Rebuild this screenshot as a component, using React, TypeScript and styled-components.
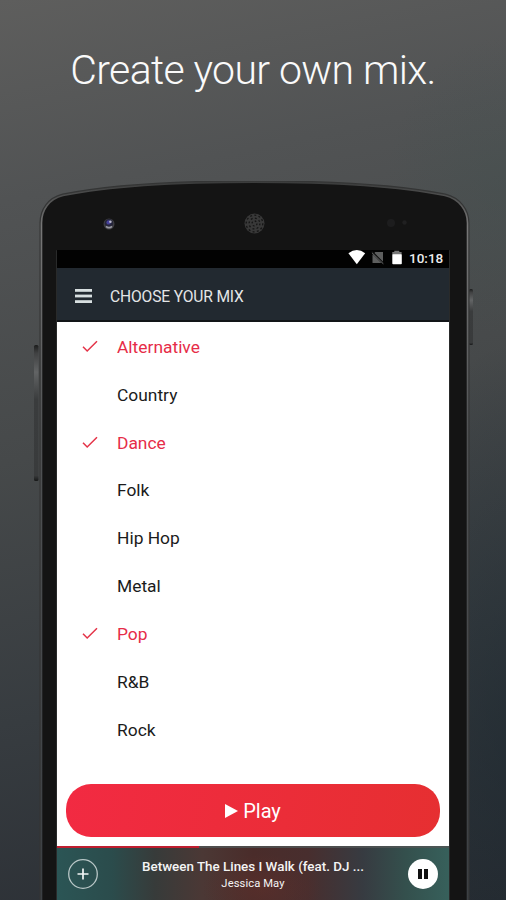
import React from "react";
import styled, { createGlobalStyle } from "styled-components";

const GlobalStyle = createGlobalStyle`
  *, *::before, *::after { box-sizing: border-box; }
  body {
    margin: 0;
    background: #3a3f42;
    font-family: Roboto, "Liberation Sans", sans-serif;
  }
`;

const Page = styled.main`
  width: 506px;
  height: 900px;
  overflow: hidden;
  display: flex;
  flex-direction: column;
  background:
    radial-gradient(ellipse 120px 150px at 506px 185px, rgba(62, 80, 78, 0.3), transparent),
    radial-gradient(ellipse 170px 400px at 520px 740px, rgba(24, 38, 46, 0.5), transparent),
    linear-gradient(168deg, #5e5e5d 0%, #515354 20%, #46494a 46%, #373c40 72%, #292d33 100%);
`;

const Headline = styled.h1`
  margin: 0;
  height: 181px;
  padding: 46px 0 0;
  text-align: center;
  color: #fafafa;
  font-size: 41px;
  font-weight: 300;
  line-height: 48px;
  letter-spacing: -0.62px;
  white-space: nowrap;
`;

const Phone = styled.section`
  position: relative;
  flex: 1;
  padding: 69px 57px 0 57px;
`;

const Shell = styled.svg`
  position: absolute;
  inset: 0;
`;

const Screen = styled.div`
  position: relative;
  width: 392px;
  height: 650px;
  display: flex;
  flex-direction: column;
  background: #fff;
`;

const StatusBar = styled.div`
  height: 18px;
  flex: none;
  display: flex;
  justify-content: flex-end;
  background: #020202;
`;

const AppBar = styled.header`
  height: 54px;
  flex: none;
  display: flex;
  align-items: center;
  padding: 4px 0 0 18px;
  gap: 18px;
  background: #222930;
  border-bottom: 2px solid #121518;
`;

const BarTitle = styled.h2`
  margin: 0;
  padding-top: 1px;
  color: #e4e6e7;
  font-size: 15.6px;
  font-weight: 400;
  line-height: 20px;
  letter-spacing: -0.15px;
  white-space: nowrap;
`;

const Genres = styled.ul`
  list-style: none;
  margin: 0;
  padding: 1px 0 0;
  flex: 1;
`;

const Genre = styled.li<{ $on?: boolean }>`
  height: 47.85px;
  display: grid;
  grid-template-columns: 35px 1fr;
  align-items: center;
  padding-left: 25px;
  color: ${(p) => (p.$on ? "#e62c48" : "#1b1b1b")};
  font-size: 17.4px;
  line-height: 22px;
`;

const PlayButton = styled.button`
  height: 53px;
  flex: none;
  margin: 0 9px 9px;
  padding: 0;
  border: 0;
  border-radius: 25px;
  display: flex;
  align-items: center;
  justify-content: center;
  gap: 5px;
  background: linear-gradient(100deg, #f22a42, #e62f31);
  color: #fff;
  font: 400 20px/26px Roboto, "Liberation Sans", sans-serif;
`;

const Player = styled.footer`
  height: 54px;
  flex: none;
  display: grid;
  grid-template-columns: 52px 1fr 52px;
  grid-template-rows: 2px 1fr;
  align-items: center;
  justify-items: center;
  background:
    radial-gradient(ellipse 60px 34px at 205px 42px, rgba(98, 48, 43, 0.5), transparent),
    linear-gradient(90deg, #2b5555 0%, #2b4c4c 14%, #373b3a 25%, #4b3835 37%, #4a2c2a 50%, #482e2e 64%, #373b41 78%, #34504d 89%, #37605b 100%);
`;

const Progress = styled.div`
  grid-column: 1 / -1;
  align-self: start;
  width: 100%;
  height: 2px;
  background: linear-gradient(90deg, #bf1e2f 0 142px, rgba(80, 84, 84, 0.8) 142px);
`;

const RoundIcon = styled.svg`
  margin-bottom: 1px;
`;

const Track = styled.div`
  width: 100%;
  padding-top: 1px;
  text-align: center;
  color: #f4f4f4;
  white-space: nowrap;
`;

const TrackTitle = styled.div`
  font-size: 13.4px;
  font-weight: 500;
  line-height: 17px;
`;

const Artist = styled.div`
  font-size: 11.2px;
  font-weight: 400;
  line-height: 15px;
  letter-spacing: 0.1px;
  padding-top: 1px;
`;

const genres = [
  { name: "Alternative", on: true },
  { name: "Country" },
  { name: "Dance", on: true },
  { name: "Folk" },
  { name: "Hip Hop" },
  { name: "Metal" },
  { name: "Pop", on: true },
  { name: "R&B" },
  { name: "Rock" },
];

const body =
  "M41.5 730V42C41.5 29 49 18 63 14.5C110 5 180 1.2 254 1.2C328 1.2 398 5 445 14.5C459 18 467.5 29 467.5 42V730Z";

function PhoneShell() {
  return (
    <Shell width="506" height="719" viewBox="0 0 506 719" aria-hidden>
      <defs>
        <linearGradient id="rim" x1="0" y1="0" x2="0" y2="1">
          <stop offset="0" stopColor="#3b3c3c" />
          <stop offset="0.06" stopColor="#777" />
          <stop offset="0.35" stopColor="#505254" />
          <stop offset="1" stopColor="#3b3f43" />
        </linearGradient>
        <linearGradient id="key" x1="0" y1="0" x2="0" y2="1">
          <stop offset="0" stopColor="#1c1d1d" />
          <stop offset="0.06" stopColor="#404142" />
          <stop offset="0.2" stopColor="#626465" />
          <stop offset="0.4" stopColor="#3a3c3d" />
          <stop offset="0.96" stopColor="#393b3c" />
          <stop offset="1" stopColor="#171818" />
        </linearGradient>
      </defs>
      <rect x="34" y="164" width="4.5" height="136" rx="1.5" fill="url(#key)" />
      <rect x="469" y="108" width="4" height="56" rx="1.5" fill="url(#key)" />
      <path d={body} fill="#141414" stroke="#343535" strokeWidth="4" />
      <path d={body} fill="#141414" stroke="url(#rim)" strokeWidth="1.6" />
      <path d="M56.5 719V69.5H449.5V719" fill="none" stroke="#292a2a" />
      <circle cx="109" cy="43" r="5.5" fill="#3e3e42" />
      <circle cx="109" cy="42.2" r="4.2" fill="#252538" />
      <circle cx="108.6" cy="41.4" r="2.2" fill="#45409a" />
      <circle cx="110.4" cy="40.8" r="1.3" fill="#b8b8cc" />
      <path d="M106 45.4q3 2.6 6 0" stroke="#9898a0" strokeWidth="1.6" fill="none" />
      <circle cx="254.5" cy="42.5" r="10" fill="#383838" />
      <g fill="none" stroke="#151515" strokeWidth="1.3">
        <circle cx="254.5" cy="42.5" r="8.3" strokeDasharray="2 2.3" />
        <circle cx="254.5" cy="42.5" r="5.4" strokeDasharray="1.9 2.3" />
        <circle cx="254.5" cy="42.5" r="2.5" strokeDasharray="1.7 2.2" />
      </g>
      <circle cx="391" cy="42" r="4" fill="#1d1d1e" />
      <circle cx="404.5" cy="41.5" r="2.2" fill="#202021" />
    </Shell>
  );
}

const StatusIcons = styled.svg`
  display: block;
`;

function Status() {
  return (
    <StatusIcons width="62" height="18" viewBox="0 0 62 18" aria-label="Wi-Fi, no SIM, battery">
      <path d="M1.4 3.2Q9.8-3 18.2 3.2L9.8 14.2Z" fill="#fff" />
      <path d="M28.3 2H36V13H25.5V4.8Z" fill="#5d5e5e" />
      <path d="M24.5 1.5L36.8 14" stroke="#0b0b0b" strokeWidth="2.2" />
      <path d="M25 2.8L36.3 13.8" stroke="#6b6c6c" strokeWidth="1" />
      <path d="M47.3 0.8H52.3V2H54.6V5H45.3V2H47.3Z" fill="#777" />
      <rect x="45.3" y="4.2" width="9.5" height="10" rx="0.8" fill="#fff" />
    </StatusIcons>
  );
}

const Clock = styled.time`
  width: 40px;
  padding-right: 6px;
  text-align: right;
  color: #ececec;
  font-size: 13.5px;
  font-weight: 500;
  line-height: 17px;
`;

const Menu = () => (
  <svg width="17" height="14" viewBox="0 0 17 14" fill="#d8dfe0">
    <rect width="17" height="2.8" />
    <rect y="5.6" width="17" height="2.8" />
    <rect y="11.2" width="17" height="2.8" />
  </svg>
);

const Check = () => (
  <svg width="16" height="13" viewBox="0 0 16 13" fill="none" stroke="#e43348" strokeWidth="1.5">
    <path d="M1 6.700L5.200 11L15 1.200" />
  </svg>
);

export default function App() {
  return (
    <>
      <GlobalStyle />
      <Page>
        <Headline>Create your own mix.</Headline>
        <Phone>
          <PhoneShell />
          <Screen>
            <StatusBar>
              <Status />
              <Clock>10:18</Clock>
            </StatusBar>
            <AppBar>
              <Menu />
              <BarTitle>CHOOSE YOUR MIX</BarTitle>
            </AppBar>
            <Genres>
              {genres.map((g) => (
                <Genre key={g.name} $on={g.on}>
                  {g.on ? <Check /> : <span />}
                  <span>{g.name}</span>
                </Genre>
              ))}
            </Genres>
            <PlayButton>
              <svg width="13" height="14" viewBox="0 0 13 14" fill="#fff">
                <path d="M0 0L13 7L0 14Z" />
              </svg>
              Play
            </PlayButton>
            <Player>
              <Progress />
              <RoundIcon width="30" height="30" viewBox="0 0 30 30" fill="none">
                <circle cx="15" cy="15" r="14.3" stroke="#b8c6c6" strokeWidth="1.3" />
                <path d="M15 9.5V20.5M9.5 15H20.5" stroke="#f2f5f5" strokeWidth="1.7" />
              </RoundIcon>
              <Track>
                <TrackTitle>Between The Lines I Walk (feat. DJ ...</TrackTitle>
                <Artist>Jessica May</Artist>
              </Track>
              <RoundIcon width="30" height="30" viewBox="0 0 30 30">
                <circle cx="15" cy="15" r="15" fill="#fff" />
                <path d="M10 10H14V20H10ZM16 10H20V20H16Z" fill="#111" />
              </RoundIcon>
            </Player>
          </Screen>
        </Phone>
      </Page>
    </>
  );
}
